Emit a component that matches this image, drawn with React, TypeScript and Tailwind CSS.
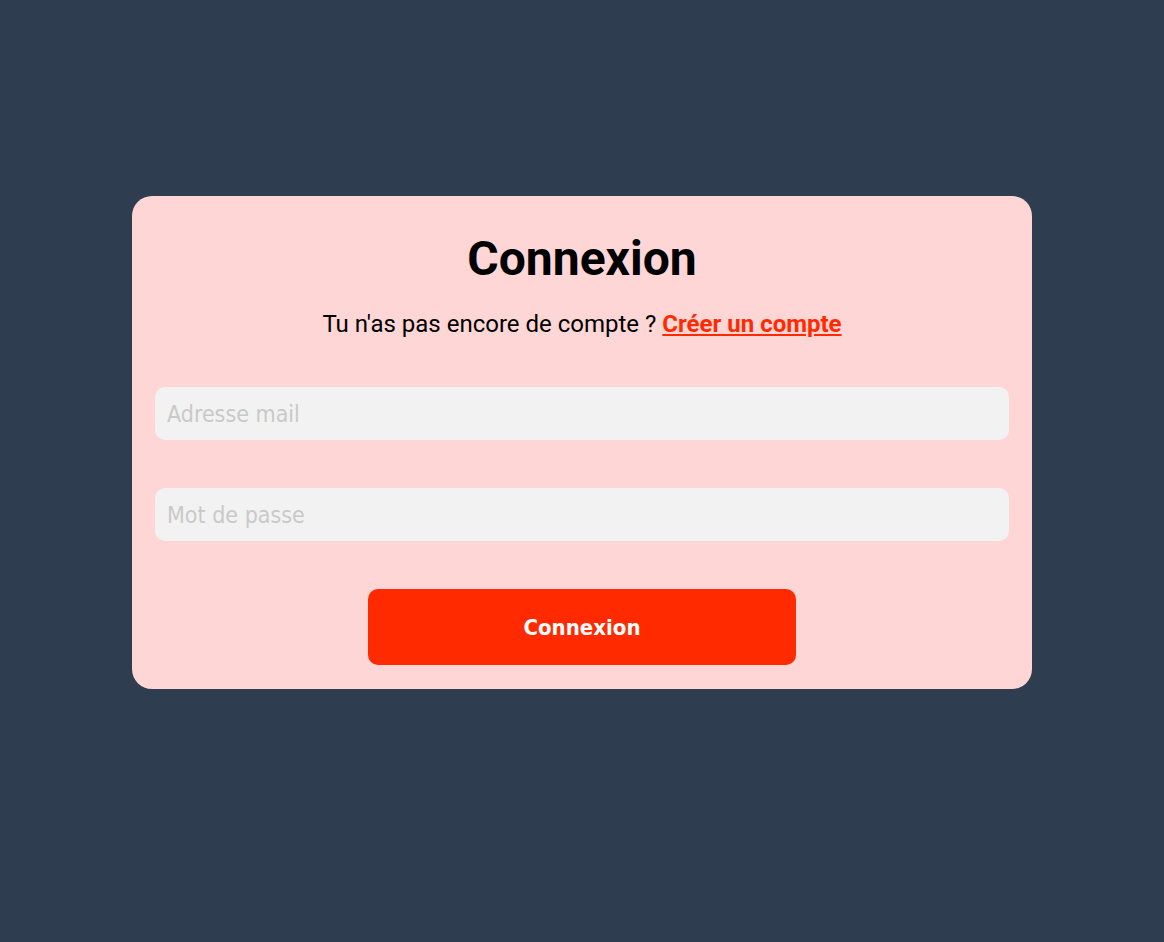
import React from "react";

const tahoma = "font-['DejaVu_Sans_Condensed','DejaVu_Sans',sans-serif]";

export default function App() {
  return (
    <div className="min-h-screen w-full bg-[#2e3d50] pt-[196px]">
      <div className="mx-auto w-[900px] rounded-[20px] bg-[#ffd6d6] px-[23px] pt-[35px] pb-[24px]">
        <h1 className="text-center font-['Roboto',sans-serif] text-[48px] leading-[56px] font-bold text-black">
          Connexion
        </h1>
        <p className="mt-[23px] text-center font-['Roboto',sans-serif] text-[24px] leading-[28px] font-normal text-black">
          Tu n'as pas encore de compte ?{" "}
          <a href="#" className="font-bold text-[#ff2a00] underline underline-offset-2">
            Créer un compte
          </a>
        </p>
        <form className="mt-[49px] flex flex-col" onSubmit={(e) => e.preventDefault()}>
          <input
            type="email"
            placeholder="Adresse mail"
            className={`h-[53px] w-full rounded-[10px] bg-[#f2f2f2] px-[12px] text-[23px] text-gray-700 outline-none placeholder:text-[#c9c9c9] ${tahoma}`}
          />
          <input
            type="password"
            placeholder="Mot de passe"
            className={`mt-[48px] h-[53px] w-full rounded-[10px] bg-[#f2f2f2] px-[12px] text-[23px] text-gray-700 outline-none placeholder:text-[#c9c9c9] ${tahoma}`}
          />
          <button
            type="submit"
            className={`mx-auto mt-[48px] h-[76px] w-[428px] rounded-[10px] bg-[#ff2a00] text-[22px] font-bold text-white ${tahoma}`}
          >
            Connexion
          </button>
        </form>
      </div>
    </div>
  );
}
